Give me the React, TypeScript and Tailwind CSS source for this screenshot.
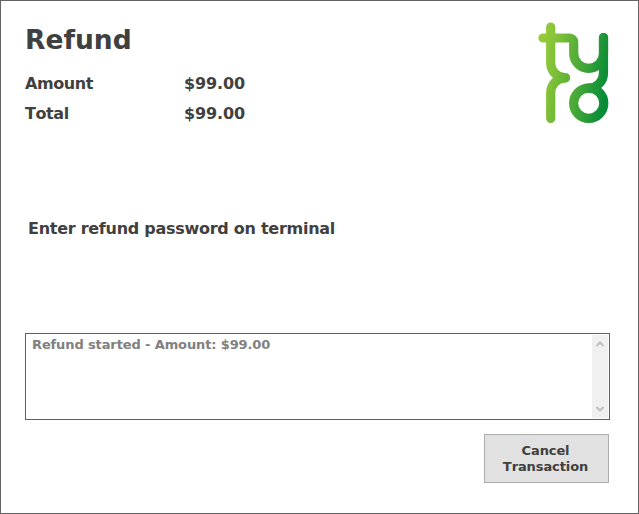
const totals = [
  { label: 'Amount', value: '$99.00' },
  { label: 'Total', value: '$99.00' },
]

const Logo = () => (
  <svg
    width="71"
    height="102"
    viewBox="0 0 71 102"
    fill="none"
    stroke="url(#logo-green)"
    strokeWidth="9.2"
    strokeLinecap="round"
  >
    <defs>
      <linearGradient
        id="logo-green"
        gradientUnits="userSpaceOnUse"
        x1="2"
        y1="45"
        x2="70"
        y2="55"
      >
        <stop offset="0" stopColor="#95ca3a" />
        <stop offset="0.2" stopColor="#80c038" />
        <stop offset="0.55" stopColor="#4dab38" />
        <stop offset="1" stopColor="#078b37" />
      </linearGradient>
    </defs>
    <path d="M12.7 5V41A14.8 14.8 0 0 0 27.5 55.8" />
    <path d="M27.5 55.8A14.8 14.8 0 0 0 12.7 70.6V96.4" />
    <path d="M5 16H31.7A4 4 0 0 1 35.7 20V31.4A14.9 14.9 0 0 0 65.5 31.4V15.6" />
    <path d="M65.5 15.6V51A15 15 0 0 1 50.6 66.1" />
    <circle cx="50.7" cy="81.2" r="15.1" />
  </svg>
)

const ScrollBar = () => (
  <div className="flex w-4 flex-col items-center justify-between bg-[#f0f0f0] py-1.5 text-[#bfbfbf]">
    <svg width="8" height="6" viewBox="0 0 8 6" fill="none" stroke="currentColor" strokeWidth="2">
      <path d="M0.5 5L4 1.5L7.5 5" />
    </svg>
    <svg width="8" height="6" viewBox="0 0 8 6" fill="none" stroke="currentColor" strokeWidth="2">
      <path d="M0.5 1L4 4.5L7.5 1" />
    </svg>
  </div>
)

const App = () => {
  return (
    <div className="flex h-[514px] w-[639px] flex-col border border-[#646464] bg-white pr-[29px] pl-6 font-['DejaVu_Sans',Verdana,sans-serif] font-bold text-[#404040] [font-kerning:none]">
      <header className="flex h-[200px] justify-between pt-[21px]">
        <div className="pt-px">
          <h1 className="text-[26.5px] leading-[34px]">Refund</h1>
          <dl className="mt-3 text-base leading-[30px] tracking-[-0.4px]">
            {totals.map(({ label, value }) => (
              <div key={label} className="flex">
                <dt className="w-[159px]">{label}</dt>
                <dd className="tracking-[-0.1px]">{value}</dd>
              </div>
            ))}
          </dl>
        </div>
        <Logo />
      </header>
      <p className="h-[132px] pt-4 pl-[3px] text-base leading-6 tracking-[-0.27px]">
        Enter refund password on terminal
      </p>
      <div className="-mr-px flex h-[87px] justify-between border border-[#0078d7] p-px">
        <p className="pt-[2px] pl-[5px] text-[13px] leading-4 tracking-[-0.12px] text-[#808080]">
          Refund started - Amount: $99.00
        </p>
        <ScrollBar />
      </div>
      <button
        type="button"
        className="mt-[14px] h-[49px] w-[125px] self-end border border-[#adadad] bg-[#e1e1e1] pr-[2px] text-[13px] leading-4 tracking-[-0.1px]"
      >
        Cancel
        <br />
        Transaction
      </button>
    </div>
  )
}

export default App
